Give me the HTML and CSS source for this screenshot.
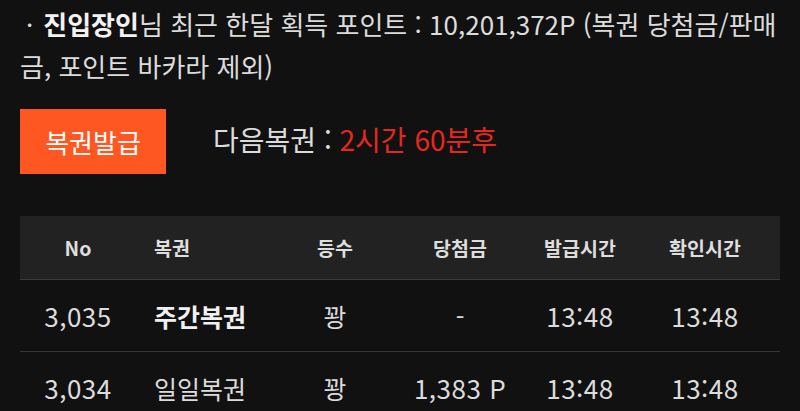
FILE: index.html
```html
<!DOCTYPE html>
<html lang="ko">
<head>
<meta charset="utf-8">
<link rel="stylesheet" href="styles.css">
</head>
<body>
<div class="page">
  <p class="info"><span class="dot">·</span><b>진입장인</b>님 최근 한달 획득 포인트 : 10,201,372P (복권 당첨금/판매금, 포인트 바카라 제외)</p>
  <div class="issue">
    <button class="btn">복권발급</button>
    <div class="next">다음복권 : <span class="red">2시간 60분후</span></div>
  </div>
  <table class="tbl">
    <colgroup>
      <col class="c1"><col class="c2"><col class="c3"><col class="c4"><col class="c5"><col class="c6">
    </colgroup>
    <thead>
      <tr><th>No</th><th class="left">복권</th><th>등수</th><th>당첨금</th><th>발급시간</th><th class="last">확인시간</th></tr>
    </thead>
    <tbody>
      <tr><td class="num">3,035</td><td class="left strong">주간복권</td><td>꽝</td><td>-</td><td class="num">13:48</td><td class="last num">13:48</td></tr>
      <tr><td class="num">3,034</td><td class="left">일일복권</td><td>꽝</td><td class="num">1,383 P</td><td class="num">13:48</td><td class="last num">13:48</td></tr>
    </tbody>
  </table>
</div>
</body>
</html>
```
FILE: styles.css
```css
html, body {
  margin: 0;
  padding: 0;
  background: #111111;
  color: #dcdcdc;
  font-family: "Noto Sans CJK KR", "Noto Sans", sans-serif;
  overflow: hidden;
}
.page {
  padding: 0 20px;
  width: 760px;
}
.info {
  margin: 0;
  padding-top: 3px;
  font-size: 26px;
  line-height: 42px;
  color: #dcdcdc;
}
.dot {
  display: inline-block;
  padding: 0 10px 0 6px;
}
.info b {
  color: #f2f2f2;
  font-weight: 700;
}
.issue {
  display: flex;
  align-items: center;
  gap: 47px;
  margin-top: 22px;
}
.btn {
  width: 146px;
  height: 65px;
  border: none;
  background: #ff5722;
  color: #ffffff;
  font-family: inherit;
  font-size: 26px;
  font-weight: 400;
  padding: 0;
  margin: 0;
}
.next {
  font-size: 28px;
  color: #dcdcdc;
  margin-top: -6px;
}
.red {
  color: #e4281e;
}
.tbl {
  margin-top: 42px;
  width: 760px;
  border-collapse: collapse;
  table-layout: fixed;
}
.c1 { width: 116px; }
.c2 { width: 134px; }
.c3 { width: 130px; }
.c4 { width: 120px; }
.c5 { width: 120px; }
.c6 { width: 140px; }
.tbl th {
  background: #222222;
  height: 63px;
  font-size: 19.5px;
  font-weight: 700;
  color: #dedede;
  text-align: center;
  padding: 0;
  border-bottom: 1px solid #3a3a3a;
}
.tbl td {
  height: 71px;
  font-size: 25px;
  text-align: center;
  padding: 0;
  color: #dcdcdc;
  border-bottom: 1px solid #363636;
}
.tbl .num {
  font-size: 26px;
  letter-spacing: 0.5px;
}
.tbl .left {
  text-align: left;
  padding-left: 18px;
}
.tbl .last {
  padding-right: 10px;
}
.tbl .strong {
  font-weight: 700;
  color: #f0f0f0;
}
```
